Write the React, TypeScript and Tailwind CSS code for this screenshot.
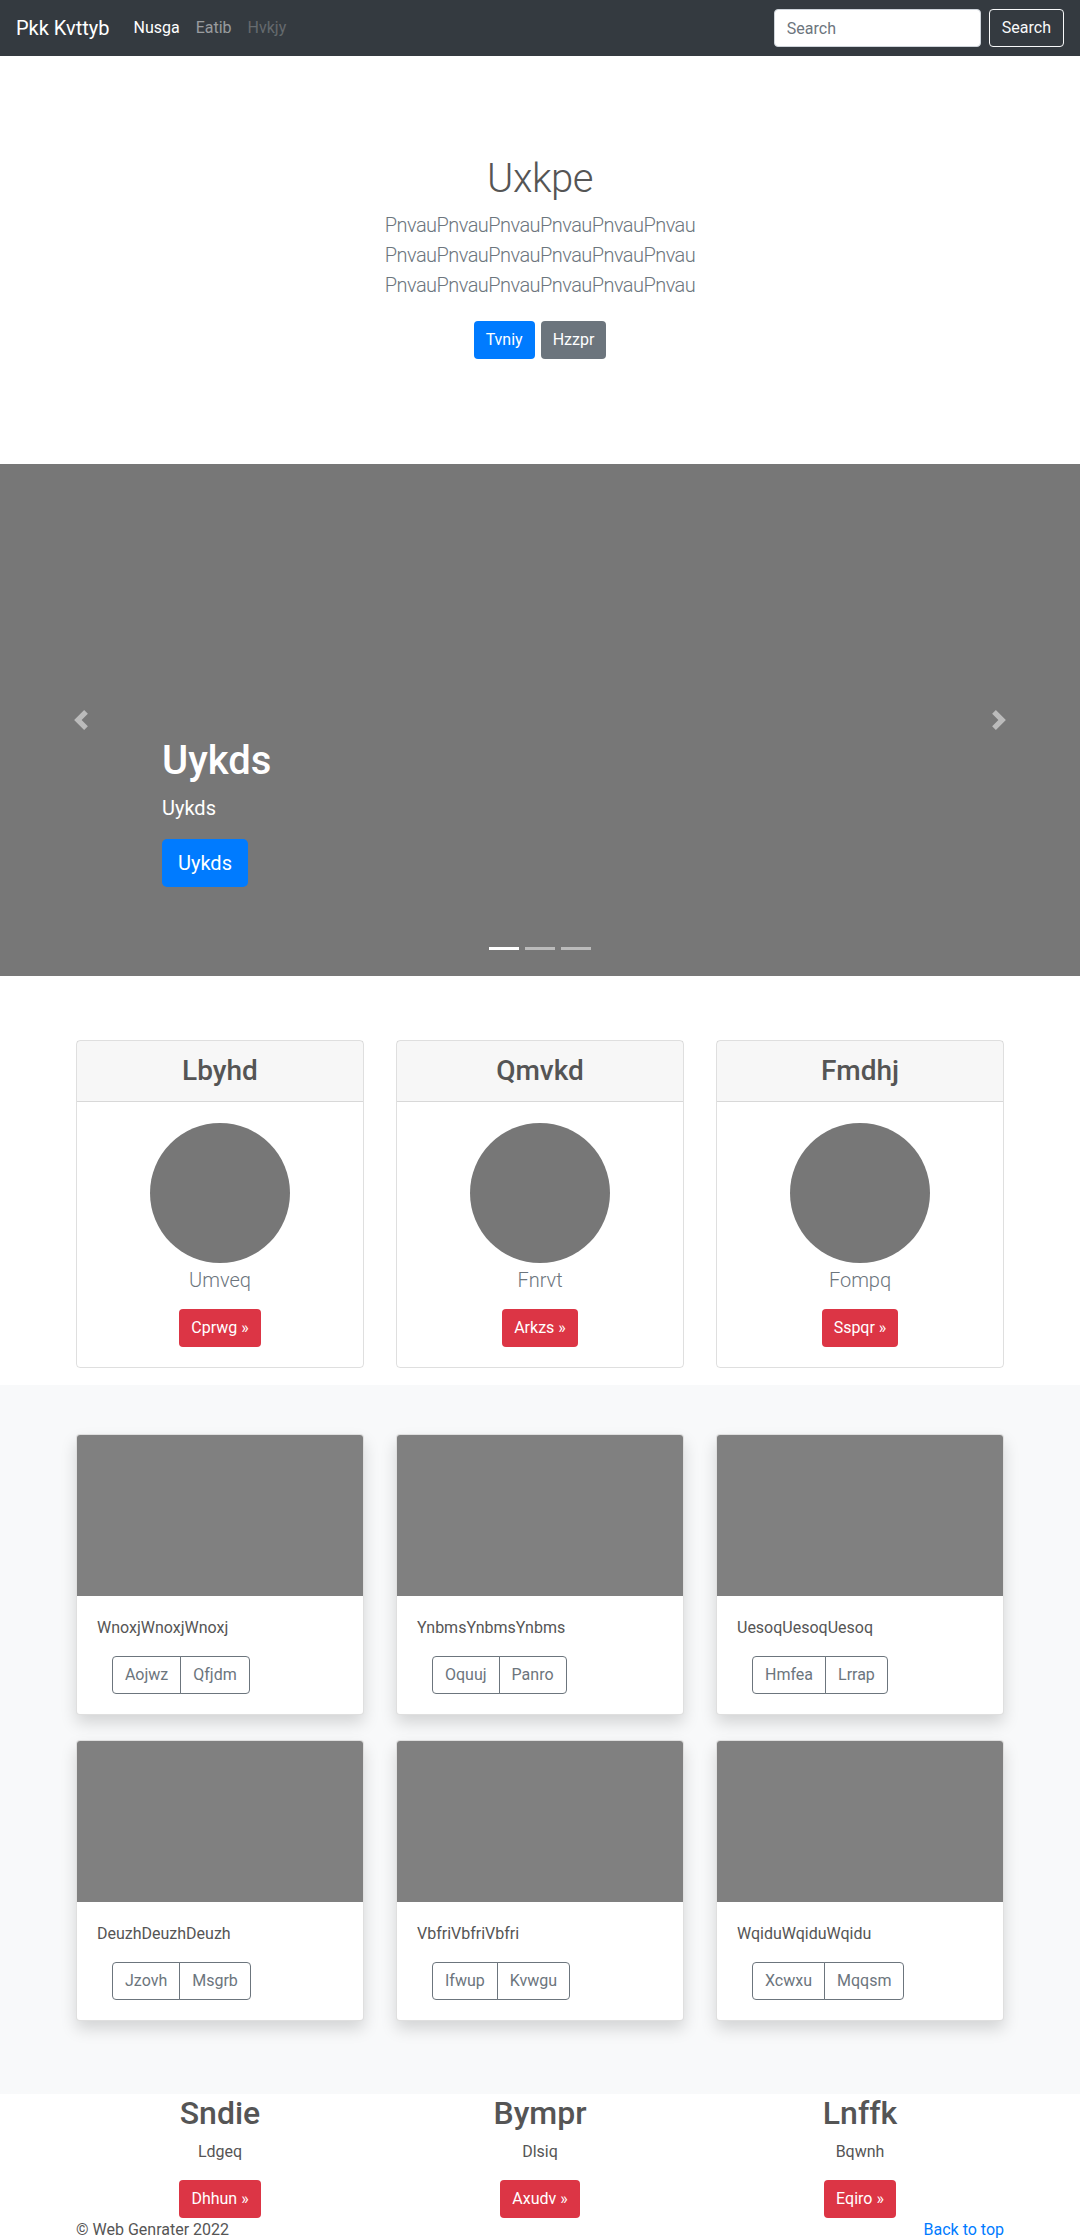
import React from "react";

const pricing = [
  { title: "Lbyhd", sub: "Umveq", btn: "Cprwg" },
  { title: "Qmvkd", sub: "Fnrvt", btn: "Arkzs" },
  { title: "Fmdhj", sub: "Fompq", btn: "Sspqr" },
];

const album = [
  { text: "WnoxjWnoxjWnoxj", a: "Aojwz", b: "Qfjdm" },
  { text: "YnbmsYnbmsYnbms", a: "Oquuj", b: "Panro" },
  { text: "UesoqUesoqUesoq", a: "Hmfea", b: "Lrrap" },
  { text: "DeuzhDeuzhDeuzh", a: "Jzovh", b: "Msgrb" },
  { text: "VbfriVbfriVbfri", a: "Ifwup", b: "Kvwgu" },
  { text: "WqiduWqiduWqidu", a: "Xcwxu", b: "Mqqsm" },
];

const marketing = [
  { title: "Sndie", sub: "Ldgeq", btn: "Dhhun" },
  { title: "Bympr", sub: "Dlsiq", btn: "Axudv" },
  { title: "Lnffk", sub: "Bqwnh", btn: "Eqiro" },
];

function Chevron({ dir }: { dir: "prev" | "next" }) {
  return (
    <svg width="20" height="20" viewBox="0 0 8 8" fill="#fff" className="opacity-50">
      {dir === "prev" ? (
        <path d="M5.25 0l-4 4 4 4 1.5-1.5L4.25 4l2.5-2.5L5.25 0z" />
      ) : (
        <path d="M2.75 0l-1.5 1.5L3.75 4l-2.5 2.5L2.75 8l4-4-4-4z" />
      )}
    </svg>
  );
}

export default function App() {
  return (
    <div className="w-[1080px] bg-white font-['Roboto',sans-serif] text-base leading-6 text-[#555]">
      {/* navbar */}
      <nav className="flex h-14 items-center bg-[#343a40] px-4">
        <a className="mr-4 text-xl leading-[30px] text-white">Pkk Kvttyb</a>
        <ul className="flex">
          <li className="px-2 text-white">Nusga</li>
          <li className="px-2 text-white/50">Eatib</li>
          <li className="px-2 text-white/25">Hvkjy</li>
        </ul>
        <form className="ml-auto flex items-center">
          <input
            placeholder="Search"
            className="h-[38px] w-[207px] rounded border border-[#ced4da] bg-white px-3 text-base text-[#495057] placeholder:text-[#6c757d] outline-none"
          />
          <button type="button" className="ml-2 h-[38px] rounded border border-[#f8f9fa] px-3 text-[#f8f9fa]">
            Search
          </button>
        </form>
      </nav>

      {/* hero */}
      <section className="pt-[99px] pb-[105px] text-center">
        <h1 className="mb-[7px] text-[40px] font-light leading-[48px] tracking-[-0.5px]">Uxkpe</h1>
        <p className="text-xl font-light leading-[30px] tracking-[-0.55px] text-[#6c757d]">
          PnvauPnvauPnvauPnvauPnvauPnvau
          <br />
          PnvauPnvauPnvauPnvauPnvauPnvau
          <br />
          PnvauPnvauPnvauPnvauPnvauPnvau
        </p>
        <div className="mt-[21px] flex justify-center gap-[6px]">
          <a className="flex h-[38px] items-center rounded bg-[#007bff] px-3 text-white">Tvniy</a>
          <a className="flex h-[38px] items-center rounded bg-[#6c757d] px-3 text-white">Hzzpr</a>
        </div>
      </section>

      {/* carousel */}
      <section className="relative h-[512px] bg-[#777]">
        <div className="absolute top-0 bottom-0 left-0 flex w-[15%] items-center justify-center">
          <Chevron dir="prev" />
        </div>
        <div className="absolute top-0 right-0 bottom-0 flex w-[15%] items-center justify-center">
          <Chevron dir="next" />
        </div>
        <div className="absolute top-[273px] right-[15%] left-[15%] text-white">
          <h1 className="mb-2 text-[40px] font-medium leading-[48px]">Uykds</h1>
          <p className="mb-4 text-xl leading-[30px]">Uykds</p>
          <a className="inline-flex h-12 items-center rounded-[5px] bg-[#007bff] px-4 text-xl text-white">Uykds</a>
        </div>
        <div className="absolute top-[483px] right-0 left-0 flex justify-center gap-[6px]">
          <span className="h-[3px] w-[30px] bg-white" />
          <span className="h-[3px] w-[30px] bg-white/50" />
          <span className="h-[3px] w-[30px] bg-white/50" />
        </div>
      </section>

      {/* pricing cards */}
      <section className="pt-16 pb-[17px]">
        <div className="mx-auto grid w-[928px] grid-cols-3 gap-8">
          {pricing.map((p) => (
            <div key={p.title} className="rounded border border-black/[0.125] text-center">
              <div className="flex h-[61px] items-center justify-center border-b border-black/[0.125] bg-black/[0.03]">
                <h3 className="text-[28px] font-medium leading-[34px]">{p.title}</h3>
              </div>
              <div className="flex flex-col items-center px-5 pt-[21px] pb-5">
                <div className="h-[140px] w-[140px] rounded-full bg-[#777]" />
                <p className="mt-[2px] text-xl font-light leading-[30px] text-[#6c757d]">{p.sub}</p>
                <a className="mt-[14px] flex h-[38px] items-center rounded bg-[#dc3545] px-3 text-white">
                  {p.btn} &raquo;
                </a>
              </div>
            </div>
          ))}
        </div>
      </section>

      {/* album */}
      <section className="bg-[#f8f9fa] pt-[49px] pb-[73px]">
        <div className="mx-auto grid w-[928px] grid-cols-3 gap-x-8 gap-y-[25px]">
          {album.map((c) => (
            <div
              key={c.text}
              className="overflow-hidden rounded border border-black/[0.125] bg-white shadow-[0_8px_16px_rgba(0,0,0,0.15)]"
            >
              <div className="h-[161px] bg-[#808080]" />
              <div className="p-5">
                <p className="mb-4">{c.text}</p>
                <div className="ml-[15px] flex">
                  <span className="flex h-[38px] items-center rounded-l border border-[#6c757d] px-3 text-[#6c757d]">
                    {c.a}
                  </span>
                  <span className="-ml-px flex h-[38px] items-center rounded-r border border-[#6c757d] px-3 text-[#6c757d]">
                    {c.b}
                  </span>
                </div>
              </div>
            </div>
          ))}
        </div>
      </section>

      {/* marketing */}
      <section>
        <div className="mx-auto grid w-[928px] grid-cols-3 gap-8 text-center">
          {marketing.map((m) => (
            <div key={m.title} className="flex flex-col items-center">
              <h2 className="mb-2 text-[32px] font-medium leading-[38px]">{m.title}</h2>
              <p className="mb-4">{m.sub}</p>
              <a className="flex h-[38px] items-center rounded bg-[#dc3545] px-3 text-white">{m.btn} &raquo;</a>
            </div>
          ))}
        </div>
        <footer className="mx-auto flex w-[928px] justify-between">
          <p>&copy; Web Genrater 2022</p>
          <a className="text-[#007bff]">Back to top</a>
        </footer>
      </section>
    </div>
  );
}
